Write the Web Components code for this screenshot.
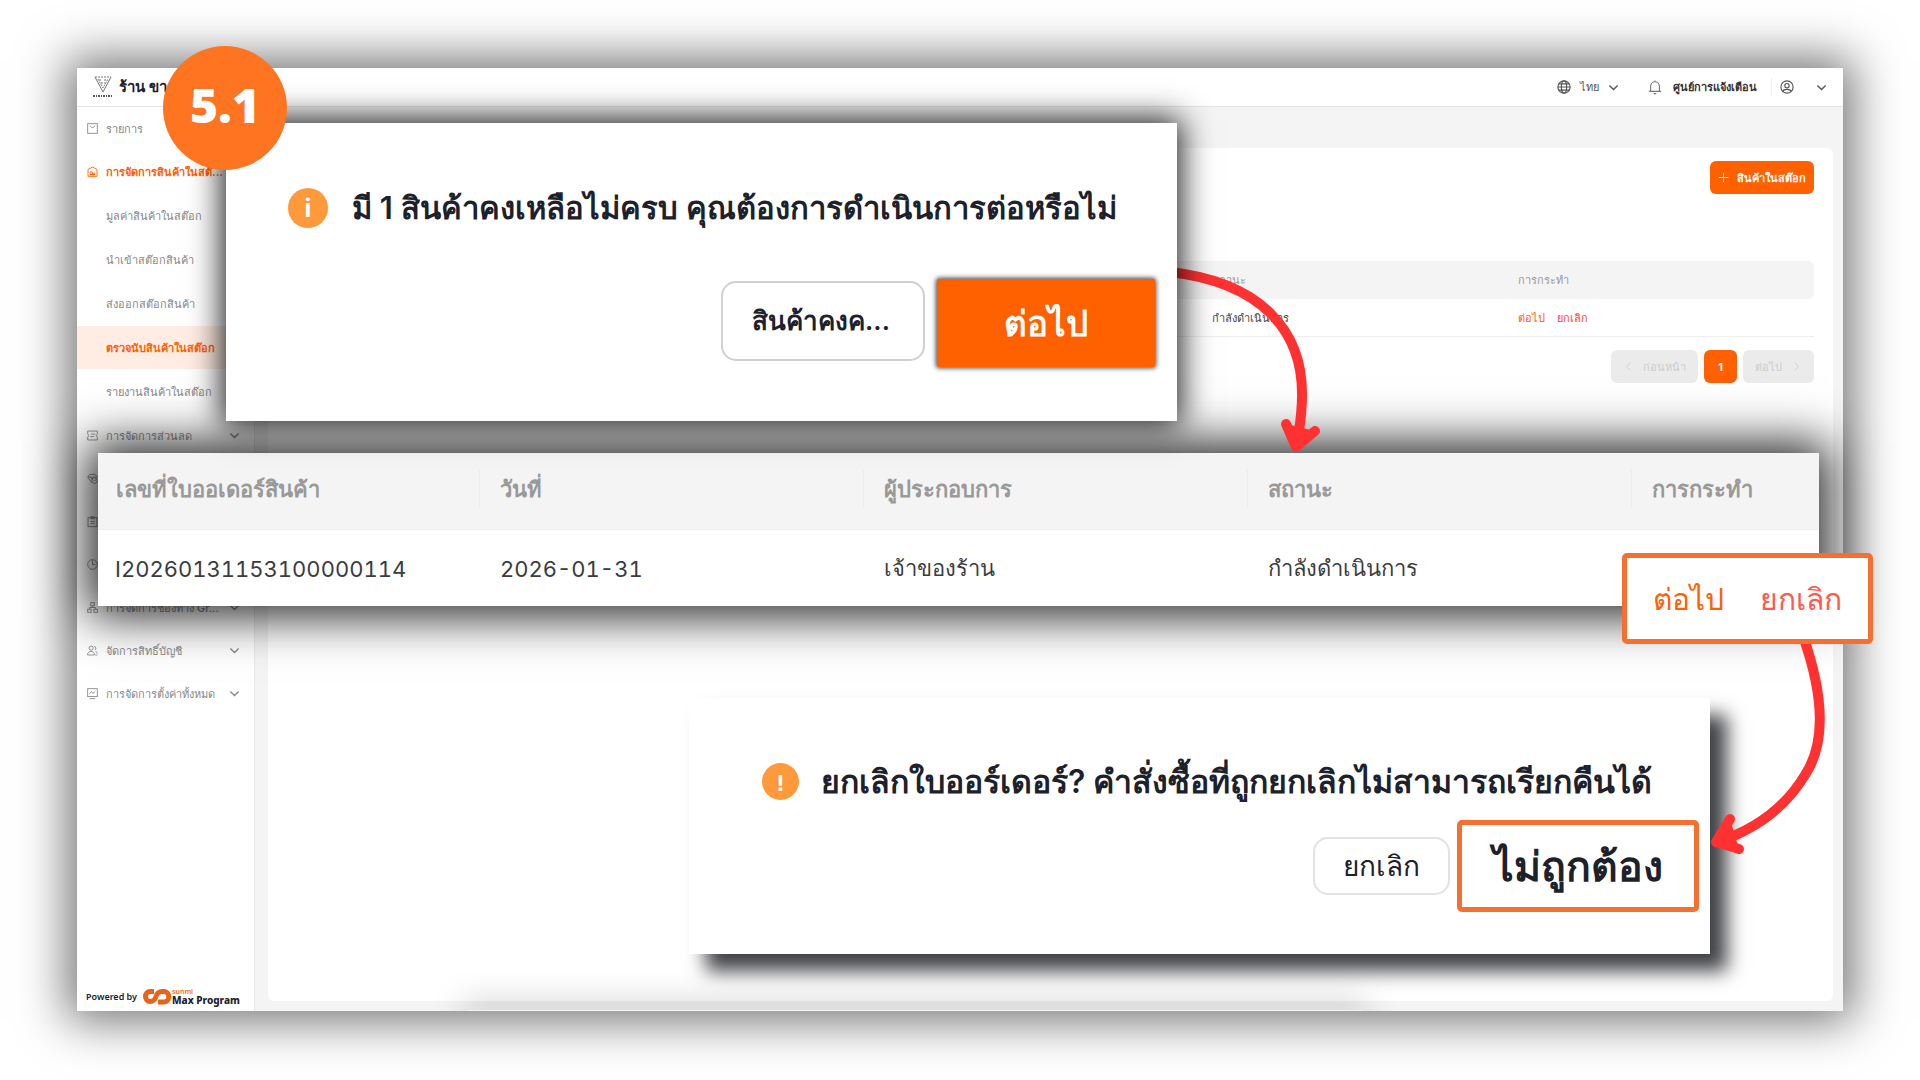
<!DOCTYPE html>
<html lang="th">
<head>
<meta charset="utf-8">
<title>ตรวจนับสินค้าในสต๊อก</title>
<style>
  * { box-sizing: border-box; }
  html, body { margin: 0; background: #fff; }
  body {
    --orange: #ff6000;
    --frame: #f57030;
    --ink: #1c212b;
    --grey: #999;
    --paper: #f4f4f4;
    font-family: Inter, "Noto Sans", "Liberation Sans", sans-serif;
    font-size: 11px;
    color: var(--ink);
  }
</style>
</head>
<body>
<guide-stage>
  <app-window>
    <shop-header slot="header"></shop-header>
    <side-nav slot="nav"></side-nav>
    <stock-page></stock-page>
  </app-window>

  <order-strip slot="strip"></order-strip>
  <notice-dialog slot="cancel" size="small" mark="!">
    ยกเลิกใบออร์เดอร์? คำสั่งซื้อที่ถูกยกเลิกไม่สามารถเรียกคืนได้
    <dialog-button slot="actions" kind="plain">ยกเลิก</dialog-button>
    <dialog-button slot="actions" kind="framed">ไม่ถูกต้อง</dialog-button>
  </notice-dialog>
  <guide-arrows slot="arrows"></guide-arrows>
  <notice-dialog slot="confirm" size="large" mark="i">
    มี 1 สินค้าคงเหลือไม่ครบ คุณต้องการดำเนินการต่อหรือไม่
    <dialog-button slot="actions" kind="outline">สินค้าคงค...</dialog-button>
    <dialog-button slot="actions" kind="primary">ต่อไป</dialog-button>
  </notice-dialog>
  <action-callout slot="callout"></action-callout>
  <step-badge slot="badge">5.1</step-badge>
</guide-stage>

<script>
/**
 * Base class: puts the markup of the subclass in an open shadow root.
 * @class BaseElement
 * @extends HTMLElement
 */
class BaseElement extends HTMLElement {
  constructor() {
    super();
    this.attachShadow({ mode: "open" });
  }

  connectedCallback() {
    this.shadowRoot.innerHTML = `<style>* { box-sizing: border-box; }</style>${this.render()}`;
  }
}

const ICONS = {
  chevron: '<path d="M2 5l6 6 6-6"/>',
  left: '<path d="M11 2L5 8l6 6"/>',
  right: '<path d="M5 2l6 6-6 6"/>',
  plus: '<path d="M8 1v14M1 8h14"/>',
  globe: '<circle cx="8" cy="8" r="7"/><ellipse cx="8" cy="8" rx="3" ry="7"/><path d="M1 8h14M2 4.500h12M2 11.500h12"/>',
  bell: '<path d="M1 13h14M3 13V7a5 5 0 0110 0v6M8 2V.5M6.500 15.500h3"/>',
  user: '<circle cx="8" cy="8" r="7"/><circle cx="8" cy="6.500" r="2.500"/><path d="M3 13c1.500-3 8.500-3 10 0"/>',
  list: '<rect x="1" y="1" width="14" height="14"/><path d="M5 4c0 3.500 6 3.500 6 0"/>',
  stock: '<path d="M1.500 15V5L8 1.500 14.500 5v10z"/><path d="M4.500 12.500v-4h3v4zM7.500 10.500h4v2h-4zM4.500 12.500h7"/>',
  coupon: '<path d="M1 1.500h14v4l-1.500 2.500 1.500 2.500v4H1v-4L2.500 8 1 5.500zM6 6h6M5 9.500h5"/>',
  member: '<path d="M4 2h8l3 4-2 2M7 14L1 6l3-4M1 6h12M5 6l3 4"/><circle cx="11" cy="11" r="4"/><path d="M9.500 10l1.500 1.500 2-2"/>',
  clipboard: '<rect x="1.500" y="2.500" width="13" height="13"/><path d="M5.500 1v3h5V1zM5 8h6M5 11h6"/>',
  pie: '<circle cx="8" cy="8" r="7"/><path d="M8 2v6h4"/>',
  sites: '<rect x="5.500" y="1" width="5" height="4.500"/><rect x="1" y="10.500" width="5" height="4.500"/><rect x="10" y="10.500" width="5" height="4.500"/><path d="M8 5.500V8M3.500 10.500V8h9v2.500"/>',
  people: '<circle cx="6" cy="4.500" r="3"/><path d="M.8 14.500c0-7 10-7 10 0zM10.500 2a3 3 0 011 5.500M12.500 9.500c2 .7 2.700 2 2.700 3M12 14.500h3"/>',
  screen: '<rect x="1" y="1" width="14" height="11.500"/><path d="M4 15.500h8M4 8l2.500-3 2 3L12 5"/>'
};

/** Line icon, drawn in the current text colour. */
class UiIcon extends BaseElement {
  render() {
    return `
      <style>
        :host { display: block; flex: none; width: 11px; height: 11px; }
        svg { display: block; width: 100%; height: 100%; overflow: visible; }
      </style>
      <svg viewBox="0 0 16 16" fill="none" stroke="currentColor" stroke-width="${this.getAttribute("weight") || "1.3"}" aria-hidden="true">${ICONS[this.getAttribute("name")]}</svg>
    `;
  }
}

/** Canvas that holds the app window and the parts laid over it. */
class GuideStage extends BaseElement {
  render() {
    return `
      <style>
        :host { display: flex; position: relative; min-height: 100vh; padding: 68px 77px 69px; overflow: hidden; }
        .over { position: absolute; }
        .strip { left: 98px; right: 101px; top: 453px; }
        .cancel { left: 689px; right: 210px; top: 698px; }
        .arrows { inset: 0; }
        .confirm { left: 226px; right: 743px; top: 123px; }
        .callout { right: 47px; top: 553px; }
        .badge { left: 163px; top: 46px; }
      </style>
      <slot></slot>
      <div class="over strip"><slot name="strip"></slot></div>
      <div class="over cancel"><slot name="cancel"></slot></div>
      <div class="over arrows"><slot name="arrows"></slot></div>
      <div class="over confirm"><slot name="confirm"></slot></div>
      <div class="over callout"><slot name="callout"></slot></div>
      <div class="over badge"><slot name="badge"></slot></div>
    `;
  }
}

/** Frame of the back office: header, side menu, page. */
class AppWindow extends BaseElement {
  render() {
    return `
      <style>
        :host { display: flex; flex: 1; flex-direction: column; background: #fff; box-shadow: 0 0 45px 10px rgba(0, 0, 0, .55); }
        .body { display: flex; flex: 1; position: relative; overflow: hidden; }
        main { display: flex; flex: 1; padding: 41px 10px 10px 13px; background: var(--paper); border-left: 1px solid #e8e8e8; }
        .shade { position: absolute; left: 390px; right: 480px; bottom: 0; height: 1px; box-shadow: 0 0 32px 4px rgba(0, 0, 0, .4); }
      </style>
      <slot name="header"></slot>
      <div class="body">
        <slot name="nav"></slot>
        <main><slot></slot></main>
        <div class="shade"></div>
      </div>
    `;
  }
}

class ShopHeader extends BaseElement {
  render() {
    return `
      <style>
        :host { display: block; }
        header { display: flex; align-items: center; height: 39px; padding: 0 16px 0 15px; border-bottom: 1px solid #e4e4e4; }
        .logo { width: 22px; height: 24px; margin-right: 5px; }
        h1 { flex: 1; margin: 0; font-size: 15px; font-weight: 700; }
        button { display: flex; align-items: center; padding: 0; border: 0; background: none; font: inherit; font-weight: 500; color: #555; }
        .lang { gap: 9px; margin-right: 29px; }
        .bell { gap: 11px; padding-right: 14px; font-weight: 700; color: #333; border-right: 1px solid #eee; }
        .bell ui-icon { color: #777; }
        .user { gap: 22px; margin-left: 8px; }
        .big { width: 14px; height: 14px; }
      </style>
      <header>
        <svg class="logo" viewBox="0 0 22 24" fill="none" stroke="#777" aria-hidden="true">
          <path d="M3 2l8 15 8-15"/>
          <path d="M3 2h16M6 4l5 9 5-9M7 5h3M12 5h3M9 8h4" stroke-dasharray="2 1"/>
          <path d="M1 21h20" stroke="#555" stroke-width="2" stroke-dasharray="2 1 1 1"/>
        </svg>
        <h1>ร้าน ขาย</h1>
        <button class="lang"><ui-icon class="big" name="globe"></ui-icon>ไทย<ui-icon name="chevron" weight="2"></ui-icon></button>
        <button class="bell"><ui-icon class="big" name="bell"></ui-icon>ศูนย์การแจ้งเตือน</button>
        <button class="user" aria-label="บัญชี"><ui-icon class="big" name="user"></ui-icon><ui-icon name="chevron" weight="2"></ui-icon></button>
      </header>
    `;
  }
}

const MENU = [
  { icon: "list", text: "รายการ" },
  {
    icon: "stock",
    text: "การจัดการสินค้าในสต๊...",
    active: true,
    items: ["มูลค่าสินค้าในสต๊อก", "นำเข้าสต๊อกสินค้า", "ส่งออกสต๊อกสินค้า", "ตรวจนับสินค้าในสต๊อก", "รายงานสินค้าในสต๊อก"],
    selected: 3
  },
  { icon: "coupon", text: "การจัดการส่วนลด", more: true },
  { icon: "member", text: "" },
  { icon: "clipboard", text: "" },
  { icon: "pie", text: "" },
  { icon: "sites", text: "การจัดการช่องทาง Gr...", more: true },
  { icon: "people", text: "จัดการสิทธิ์บัญชี", more: true },
  { icon: "screen", text: "การจัดการตั้งค่าทั้งหมด", more: true }
];

class SideNav extends BaseElement {
  render() {
    return `
      <style>
        :host { display: flex; flex: none; flex-direction: column; justify-content: space-between; width: 177px; background: #fff; }
        ul { display: flex; flex-direction: column; margin: 0; padding: 0; list-style: none; }
        ul ul { gap: 1px; padding: 1px 0; }
        a { display: flex; align-items: center; gap: 8px; height: 43px; padding: 0 14px 0 10px; font-weight: 500; color: #888; text-decoration: none; white-space: nowrap; }
        a span { flex: 1; }
        ul ul a { padding-left: 29px; }
        .active { color: var(--orange); font-weight: 700; }
        .selected { color: var(--orange); background: #ffede4; font-weight: 700; }
        footer { display: flex; align-items: center; gap: 6px; padding: 0 9px 6px; font: 600 9px "Noto Sans", sans-serif; white-space: nowrap; }
        .brand { display: flex; align-items: center; gap: 1px; }
        .brand svg { width: 28px; height: 17px; }
        .brand div { line-height: 10px; font-size: 10px; font-weight: 800; }
        small { display: block; font-size: 7px; line-height: 6px; font-weight: 600; color: #ef6b20; }
      </style>
      <nav><ul>${MENU.map((entry) => this.renderEntry(entry)).join("")}</ul></nav>
      <footer>
        <span>Powered by</span>
        <div class="brand">
          <svg viewBox="0 0 28 17" fill="none" stroke="#e8641c" stroke-width="5" aria-hidden="true">
            <path d="M11 3.500H7a4.500 5 0 000 10c4 0 5-2 6-5s2-5 6-5h2a4.500 5 0 010 10.500h-6"/>
          </svg>
          <div><small>sunmi</small>Max Program</div>
        </div>
      </footer>
    `;
  }

  renderEntry(entry) {
    const items = (entry.items || []).map((text, i) =>
      `<li><a href="#"${i === entry.selected ? ' class="selected" aria-current="page"' : ""}>${text}</a></li>`);
    return `
      <li>
        <a href="#"${entry.active ? ' class="active"' : ""}>
          <ui-icon name="${entry.icon}"></ui-icon><span>${entry.text}</span>
          ${entry.more ? '<ui-icon name="chevron" weight="2"></ui-icon>' : ""}
        </a>
        ${items.length ? `<ul>${items.join("")}</ul>` : ""}
      </li>
    `;
  }
}

/** Stock count page: add button, orders and pagination. */
class StockPage extends BaseElement {
  render() {
    return `
      <style>
        :host { display: flex; flex: 1; flex-direction: column; padding: 13px 19px; border-radius: 6px; background: #fff; }
        button { display: flex; align-items: center; justify-content: center; gap: 8px; height: 33px; padding: 0 8px; border: 0; border-radius: 6px; font: inherit; font-weight: 700; color: #fff; background: var(--orange); }
        .add { align-self: flex-end; margin-bottom: 67px; }
        table { width: 100%; border-collapse: separate; border-spacing: 0; table-layout: fixed; }
        th, td { height: 38px; padding: 0 9px; text-align: left; font-weight: 500; }
        th { color: var(--grey); background: var(--paper); }
        th:first-child { border-radius: 6px 0 0 6px; }
        th:last-child { border-radius: 0 6px 6px 0; }
        td { border-bottom: 1px solid #eee; color: #444; }
        a { margin-right: 12px; color: var(--orange); text-decoration: none; }
        a + a { color: #ff4438; }
        .pages { display: flex; justify-content: flex-end; gap: 6px; padding-top: 13px; }
        .pages button { min-width: 33px; }
        .pages button:disabled { gap: 9px; padding: 0 12px; background: #ebebeb; color: #ccc; font-weight: 500; }
      </style>
      <button class="add"><ui-icon name="plus"></ui-icon>สินค้าในสต๊อก</button>
      <table>
        <thead><tr><th></th><th></th><th></th><th>สถานะ</th><th>การกระทำ</th></tr></thead>
        <tbody><tr><td></td><td></td><td></td><td>กำลังดำเนินการ</td><td><a href="#">ต่อไป</a><a href="#">ยกเลิก</a></td></tr></tbody>
      </table>
      <div class="pages">
        <button disabled><ui-icon name="left"></ui-icon>ก่อนหน้า</button>
        <button>1</button>
        <button disabled>ต่อไป<ui-icon name="right"></ui-icon></button>
      </div>
    `;
  }
}

/** Enlarged dialog. The "size" attribute picks one of its two looks. */
class NoticeDialog extends BaseElement {
  render() {
    return `
      <style>
        :host { display: block; background: #fff; }
        :host([size="large"]) { padding: 64px 22px 54px 62px; box-shadow: 0 0 30px 4px rgba(0, 0, 0, .88); }
        :host([size="small"]) { padding: 63px 11px 42px 73px; box-shadow: 17px 17px 18px rgba(0, 3, 8, .75); }
        .title { display: flex; align-items: center; gap: 24px; height: 41px; font-size: 31px; line-height: 40px; font-weight: 600; white-space: nowrap; }
        :host([size="small"]) .title { gap: 22px; font-size: 32px; }
        .mark { display: grid; flex: none; place-items: center; width: 40px; height: 40px; border-radius: 50%; background: #ff9a3c; color: #fff; font-size: 25px; font-weight: 700; }
        :host([size="small"]) .mark { width: 37px; height: 37px; font-size: 22px; }
        .actions { display: flex; align-items: center; justify-content: flex-end; gap: 12px; padding-top: 51px; }
        :host([size="small"]) .actions { gap: 7px; padding-top: 18px; }
      </style>
      <div class="title"><span class="mark">${this.getAttribute("mark")}</span><span><slot></slot></span></div>
      <div class="actions"><slot name="actions"></slot></div>
    `;
  }
}

class DialogButton extends BaseElement {
  render() {
    return `
      <style>
        :host { display: block; }
        button { display: block; border: 2px solid #d0d0d0; border-radius: 15px; background: #fff; font: inherit; font-size: 26px; font-weight: 600; color: var(--ink); white-space: nowrap; }
        .outline { width: 204px; height: 80px; margin-bottom: 4px; padding: 0 4px 2px 0; }
        .primary { width: 218px; height: 88px; border: 0; border-radius: 2px; background: var(--orange); color: #fff; font-size: 35px; font-weight: 700; box-shadow: 0 0 5px 1px rgba(0, 0, 0, .75); }
        .plain { width: 137px; height: 58px; border-color: #e2e2e2; font-size: 28px; font-weight: 500; }
        .framed { width: 242px; height: 92px; border: 5px solid var(--frame); border-radius: 5px; font-size: 41px; font-weight: 700; }
      </style>
      <button class="${this.getAttribute("kind")}"><slot></slot></button>
    `;
  }
}

/** Enlarged rows of the order table. */
class OrderStrip extends BaseElement {
  render() {
    return `
      <style>
        :host { display: block; background: #fff; box-shadow: 0 0 45px 10px rgba(0, 0, 0, .85); }
        table { width: 100%; border-collapse: collapse; table-layout: fixed; }
        th, td { font-size: 22px; text-align: left; white-space: nowrap; }
        th { height: 76px; padding: 0; color: var(--grey); font-weight: 600; background: var(--paper); border-bottom: 1px solid #eee; }
        th div { height: 38px; margin-bottom: 4px; padding: 0 20px; line-height: 38px; border-left: 1px solid #ececec; }
        th:first-child div { padding: 0 18px; border: 0; }
        td { height: 77px; padding: 2px 21px 0; color: #3b3c40; font-weight: 400; }
        td:first-child { padding: 2px 17px 0; }
        .num { font-variant-numeric: tabular-nums; }
        col { width: 384px; }
        col:first-child { width: 381px; }
        col:last-child { width: auto; }
      </style>
      <table>
        <colgroup><col><col><col><col><col></colgroup>
        <thead><tr>
          <th><div>เลขที่ใบออเดอร์สินค้า</div></th><th><div>วันที่</div></th><th><div>ผู้ประกอบการ</div></th><th><div>สถานะ</div></th><th><div>การกระทำ</div></th>
        </tr></thead>
        <tbody><tr>
          <td class="num">I20260131153100000114</td><td class="num">2026-01-31</td><td>เจ้าของร้าน</td><td>กำลังดำเนินการ</td><td></td>
        </tr></tbody>
      </table>
    `;
  }
}

class ActionCallout extends BaseElement {
  render() {
    return `
      <style>
        :host { display: flex; align-items: center; justify-content: center; gap: 36px; width: 251px; height: 91px; padding-top: 2px; border: 5px solid var(--frame); border-radius: 5px; background: #fff; font-size: 30px; box-sizing: border-box; }
        a { color: var(--orange); text-decoration: none; }
        a + a { color: #ff5a50; }
      </style>
      <a href="#">ต่อไป</a><a href="#">ยกเลิก</a>
    `;
  }
}

/** Two hand-drawn arrows that lead from one step to the next. */
class GuideArrows extends BaseElement {
  render() {
    return `
      <style>
        :host { display: block; height: 100%; pointer-events: none; }
        svg { display: block; width: 100%; height: 100%; }
      </style>
      <svg viewBox="0 0 1920 1080" fill="none" stroke="#ff3131" stroke-width="10" stroke-linecap="round" stroke-linejoin="round" aria-hidden="true">
        <path d="M1170 272C1260 282 1303 330 1302 396C1302 415 1299 430 1297 446"/>
        <path d="M1286 424L1296 447L1315 431" fill="#ff3131"/>
        <path d="M1803 636C1822 690 1828 740 1805 775C1785 808 1755 830 1717 842"/>
        <path d="M1730 819L1716 842L1739 849" fill="#ff3131"/>
      </svg>
    `;
  }
}

class StepBadge extends BaseElement {
  render() {
    return `
      <style>
        :host { display: grid; place-items: center; width: 124px; height: 124px; padding-bottom: 8px; border-radius: 50%; background: #ff7420; color: #fff; font: 800 48px "Open Sans", "Noto Sans", sans-serif; box-sizing: border-box; }
      </style>
      <span><slot></slot></span>
    `;
  }
}

customElements.define("ui-icon", UiIcon);
customElements.define("guide-stage", GuideStage);
customElements.define("app-window", AppWindow);
customElements.define("shop-header", ShopHeader);
customElements.define("side-nav", SideNav);
customElements.define("stock-page", StockPage);
customElements.define("notice-dialog", NoticeDialog);
customElements.define("dialog-button", DialogButton);
customElements.define("order-strip", OrderStrip);
customElements.define("action-callout", ActionCallout);
customElements.define("guide-arrows", GuideArrows);
customElements.define("step-badge", StepBadge);
</script>
</body>
</html>
